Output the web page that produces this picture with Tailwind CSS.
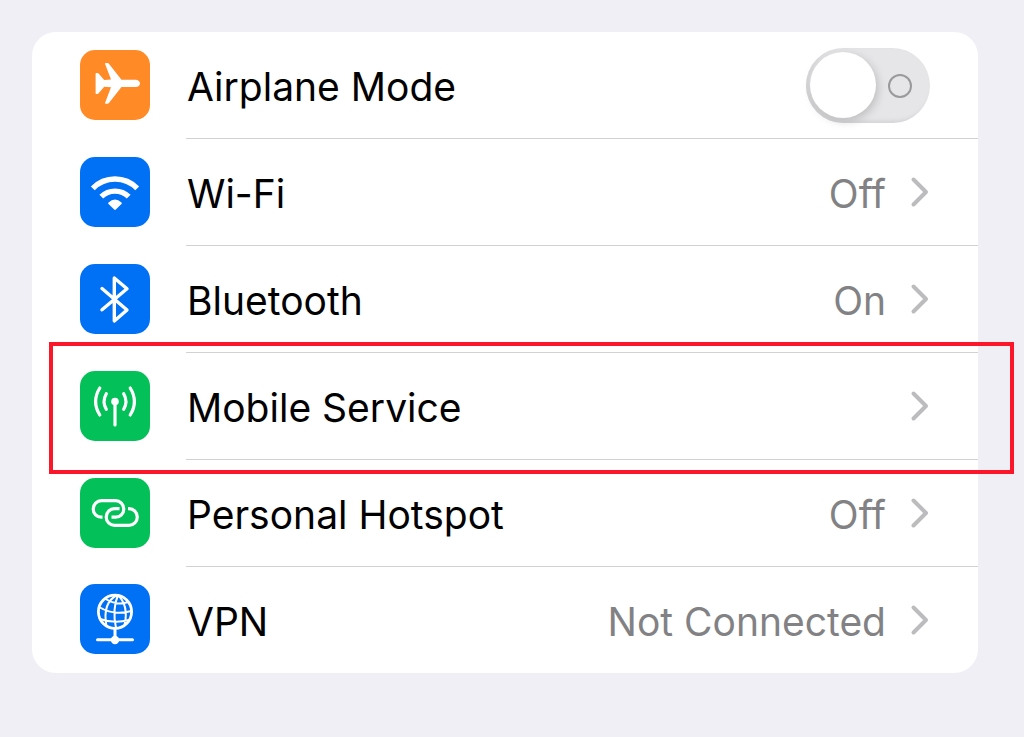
<!DOCTYPE html>
<html lang="en">
<head>
<meta charset="utf-8">
<meta name="viewport" content="width=device-width, initial-scale=1">
<title>Settings</title>
<script src="https://cdn.jsdelivr.net/npm/@tailwindcss/browser@4"></script>
</head>
<body class="min-h-screen bg-[#f0eff5] pt-8 pr-[46px] pb-16 pl-8 font-['Inter','Liberation_Sans',sans-serif] text-[39px] leading-[48px] text-black">
<main>
<ul class="rounded-3xl bg-white">
  <li class="flex items-center pl-12">
    <svg class="mb-[2px] size-[70px] shrink-0 rounded-[15px] bg-[#ff8a26]" viewBox="0 0 70 70" fill="#fff" aria-hidden="true"><path d="M25.600 13h1.800q1 0 1.700 1L41.500 29.800H55.500C58.300 29.800 60 31.800 60 33.400S58.300 37 55.500 37H41.500L29.100 52.800q-.7 1-1.700 1h-1.800q-.8 0-.5-1L31 37.200 24.200 36.800 18.600 43.300q-.5.600-1.200.6H16.200q-.6 0-.6-.7V23.600q0-.7.6-.7h1.200q.7 0 1.200.6L24.200 30 31 29.600 25.100 14q-.3-1 .5-1z"/></svg>
    <div class="ml-9 flex h-[107px] min-w-0 flex-1 items-center justify-between border-b border-[#d2d2d4] pr-12 pl-px">
      <label for="airplane" class="pt-1">Airplane Mode</label>
      <input id="airplane" type="checkbox" role="switch" class="flex h-[75px] w-[124px] appearance-none items-center justify-between rounded-full bg-[#e6e6e8] pr-[18px] pl-1 shadow-[inset_3px_-2px_4px_#d2d2d4] before:size-[66px] before:rounded-full before:bg-white before:shadow-[2px_3px_10px_#0000002e] before:content-[''] after:mt-[2px] after:size-6 after:rounded-full after:border-2 after:border-[#9a9a9c] after:content-['']">
    </div>
  </li>
  <li>
    <a href="#wifi" class="flex items-center pl-12">
      <svg class="mb-[2px] size-[70px] shrink-0 rounded-[15px] bg-[#0070f5]" viewBox="0 0 70 70" fill="none" stroke="#fff" stroke-width="5.400" aria-hidden="true"><path d="M12.800 31.300a31 31 0 0 1 44.400 0M21.300 39.700a19.500 19.500 0 0 1 27.400 0"/><path d="M28.500 45.400q6.500-5.800 13 0 .8.800 0 1.600L35.800 52.600q-.8.800-1.600 0L28.500 47q-.8-.8 0-1.600z" fill="#fff" stroke="none"/></svg>
      <span class="ml-9 flex h-[107px] min-w-0 flex-1 items-center border-b border-[#d2d2d4] pr-12 pl-px">
        <span class="flex-1 pt-1">Wi-Fi</span><span class="pt-1 text-[#828285]">Off</span>
        <svg class="ml-6 h-8 w-5 shrink-0" viewBox="0 0 20 32" fill="none" stroke="#bcbcbe" stroke-width="4" stroke-linecap="round" stroke-linejoin="round" aria-hidden="true"><path d="M3.500 3.500 16 16 3.500 28.500"/></svg>
      </span>
    </a>
  </li>
  <li>
    <a href="#bluetooth" class="flex items-center pl-12">
      <svg class="mb-[2px] size-[70px] shrink-0 rounded-[15px] bg-[#0070f5]" viewBox="0 0 70 70" fill="none" stroke="#fff" stroke-width="3.400" stroke-linecap="round" stroke-linejoin="round" aria-hidden="true"><path d="M22 24.500 47 46 34.300 57V14L47 24.800 22 45.800"/></svg>
      <span class="ml-9 flex h-[107px] min-w-0 flex-1 items-center border-b border-[#d2d2d4] pr-12 pl-px">
        <span class="flex-1 pt-1">Bluetooth</span><span class="pt-1 text-[#828285]">On</span>
        <svg class="ml-6 h-8 w-5 shrink-0" viewBox="0 0 20 32" fill="none" stroke="#bcbcbe" stroke-width="4" stroke-linecap="round" stroke-linejoin="round" aria-hidden="true"><path d="M3.500 3.500 16 16 3.500 28.500"/></svg>
      </span>
    </a>
  </li>
  <li class="relative">
    <a href="#mobile" class="flex items-center pl-12">
      <svg class="mb-[2px] size-[70px] shrink-0 rounded-[15px] bg-[#04c058]" viewBox="0 0 70 70" fill="none" stroke="#fff" stroke-width="3.200" stroke-linecap="round" aria-hidden="true"><path d="M35 31v23M26.300 22.700q-4.500 7.800 0 15.600M43.700 22.700q4.500 7.800 0 15.600M19.800 17q-8.400 13.500 0 27M50.200 17q8.400 13.500 0 27"/><circle cx="35" cy="30.500" r="3.800" fill="#fff" stroke="none"/></svg>
      <span class="ml-9 flex h-[107px] min-w-0 flex-1 items-center border-b border-[#d2d2d4] pr-12 pl-px">
        <span class="flex-1 pt-1">Mobile Service</span>
        <svg class="ml-6 h-8 w-5 shrink-0" viewBox="0 0 20 32" fill="none" stroke="#bcbcbe" stroke-width="4" stroke-linecap="round" stroke-linejoin="round" aria-hidden="true"><path d="M3.500 3.500 16 16 3.500 28.500"/></svg>
      </span>
    </a>
    <div class="pointer-events-none absolute -top-[11px] -right-9 -bottom-[14px] left-[17px] z-10 border-4 border-[#fb1729]"></div>
  </li>
  <li>
    <a href="#hotspot" class="flex items-center pl-12">
      <svg class="mb-[2px] size-[70px] shrink-0 rounded-[15px] bg-[#04c058]" viewBox="0 0 70 70" fill="none" stroke="#fff" stroke-width="3.200" aria-hidden="true"><path d="M22.500 39.200H21.500a8.300 8.300 0 0 1 0-16.600H35.500a8.300 8.300 0 0 1 0 16.600H31.500M39.500 30.700H34.500a8.300 8.300 0 0 0 0 16.600H49a8.300 8.300 0 0 0 0-16.600H48"/></svg>
      <span class="ml-9 flex h-[107px] min-w-0 flex-1 items-center border-b border-[#d2d2d4] pr-12 pl-px">
        <span class="flex-1 pt-1">Personal Hotspot</span><span class="pt-1 text-[#828285]">Off</span>
        <svg class="ml-6 h-8 w-5 shrink-0" viewBox="0 0 20 32" fill="none" stroke="#bcbcbe" stroke-width="4" stroke-linecap="round" stroke-linejoin="round" aria-hidden="true"><path d="M3.500 3.500 16 16 3.500 28.500"/></svg>
      </span>
    </a>
  </li>
  <li>
    <a href="#vpn" class="flex items-center pl-12">
      <svg class="mb-[2px] size-[70px] shrink-0 rounded-[15px] bg-[#0070f5]" viewBox="0 0 70 70" fill="none" stroke="#fff" stroke-width="2.800" stroke-linecap="round" aria-hidden="true"><circle cx="35" cy="27.700" r="16.600"/><g stroke-width="2"><path d="M37 11Q22 19 26.500 42M38 11Q32 25 36 44M38 11Q49 22 44.500 41M25 14.500Q36 22 48.500 18M19 23Q34 32 51.500 27M20 35Q34 40 49 36"/></g><path d="M35 45v11M17.500 55.700h35" stroke-width="3"/><circle cx="35" cy="56" r="4.200" fill="#fff" stroke="none"/></svg>
      <span class="ml-9 flex h-[106px] min-w-0 flex-1 items-center pr-12 pl-px">
        <span class="flex-1 pt-1">VPN</span><span class="pt-1 text-[#828285]">Not Connected</span>
        <svg class="ml-6 h-8 w-5 shrink-0" viewBox="0 0 20 32" fill="none" stroke="#bcbcbe" stroke-width="4" stroke-linecap="round" stroke-linejoin="round" aria-hidden="true"><path d="M3.500 3.500 16 16 3.500 28.500"/></svg>
      </span>
    </a>
  </li>
</ul>
</main>
</body>
</html>
